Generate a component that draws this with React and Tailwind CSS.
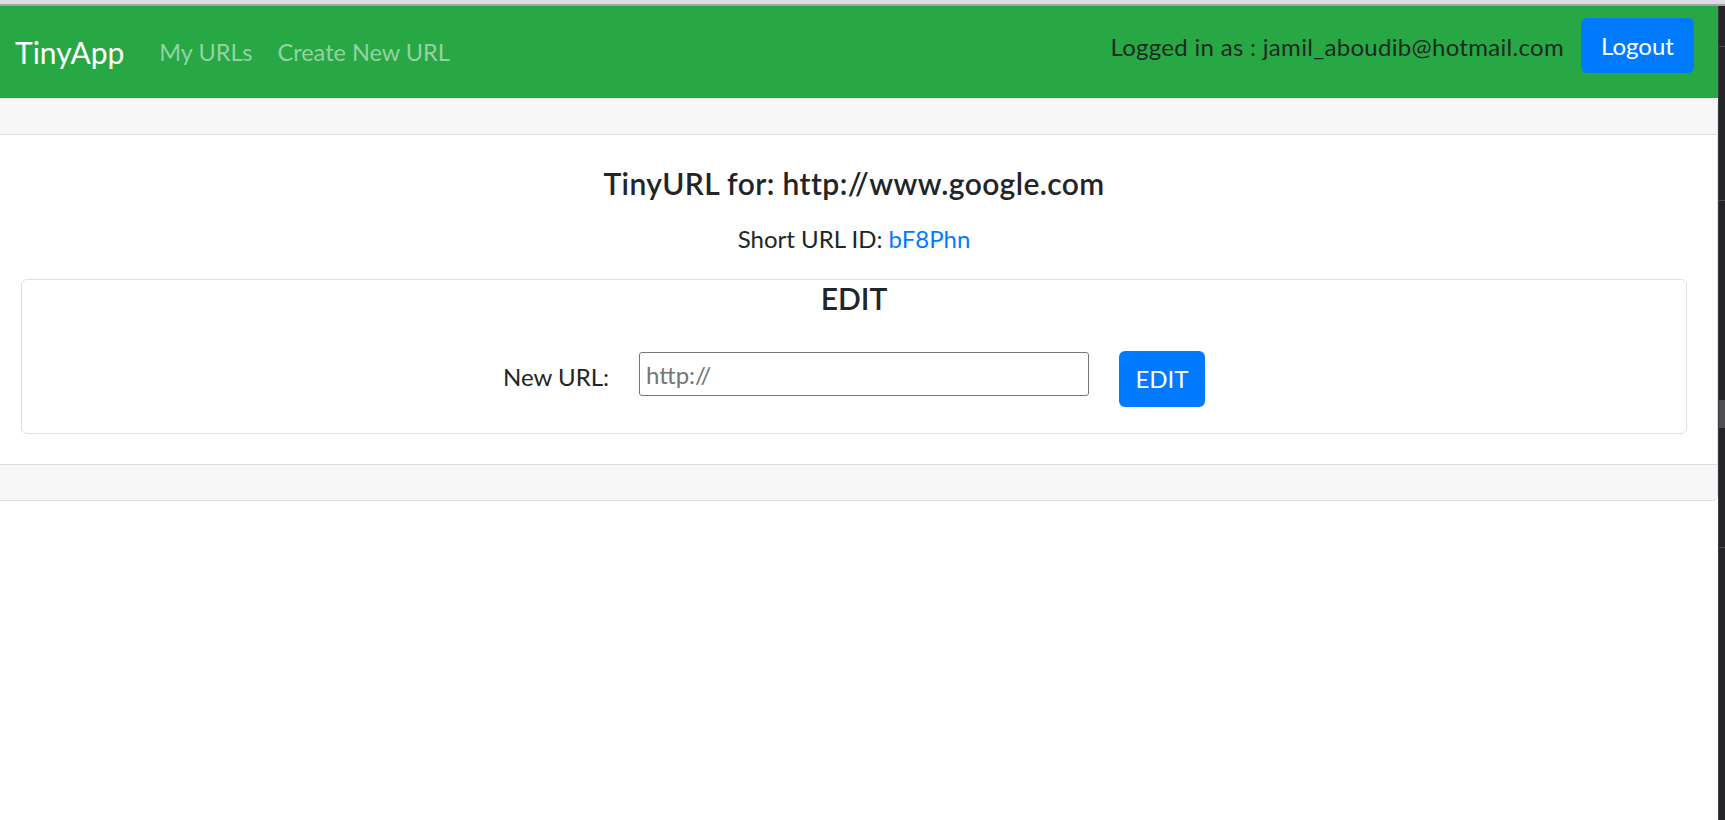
import React from "react";

export default function App() {
  return (
    <div
      className="w-[1725px] h-[820px] bg-white overflow-hidden flex flex-col text-[#212529] font-['Lato','Noto_Sans',sans-serif]"
    >
      <div className="h-[4px] bg-[#dcdce1] shrink-0" />
      <div className="h-[2px] bg-[#a4a4a6] shrink-0" />
      <div className="flex flex-1 min-h-0">
        <div className="w-[1718px] flex flex-col">
          <nav className="h-[92px] bg-[#28a745] flex items-center pl-[15px] pr-[24px] shrink-0">
            <span className="text-[30px] leading-[36px] text-white mr-[35px]">TinyApp</span>
            <a className="text-[23.5px] leading-[36px] text-[#93d3a2] mr-[25px]">My URLs</a>
            <a className="text-[23.5px] leading-[36px] text-[#93d3a2]">Create New URL</a>
            <div className="flex-1" />
            <div className="self-start mt-[12px] flex items-center">
              <span className="text-[24px] leading-[36px] tracking-[0.3px] text-[#1d2a21] mr-[17px] mt-[3px]">
                Logged in as : jamil_aboudib@hotmail.com
              </span>
              <button className="w-[113px] h-[55px] rounded-[6px] bg-[#007bff] text-white text-[24px] leading-[36px]">
                Logout
              </button>
            </div>
          </nav>

          <div className="border-t border-r border-b border-[#dfdfdf] rounded-r-[6px] flex flex-col">
            <div className="h-[36px] bg-[#f7f7f7] border-b border-[#dfdfdf] rounded-tr-[6px]" />
            <div className="pl-[21px] pr-[30px] pt-[30px] pb-[30px] flex flex-col items-stretch">
              <h5 className="text-[30px] leading-[36px] font-semibold tracking-[0.4px] text-center mb-[12px]">
                TinyURL for: http://www.google.com
              </h5>
              <p className="text-[24px] leading-[36px] text-center mt-[8px] mb-[22px]">
                Short URL ID: <a className="text-[#007bff]">bF8Phn</a>
              </p>
              <div className="border border-[#dfdfdf] rounded-[6px] flex flex-col items-center pb-[26px]">
                <h5 className="text-[30px] leading-[36px] font-semibold text-center">EDIT</h5>
                <div className="mt-[35px] flex items-start gap-[30px]">
                  <label className="text-[24px] leading-[36px] mt-[8px]">New URL:</label>
                  <input
                    type="text"
                    placeholder="http://"
                    className="mt-[1px] w-[450px] h-[44px] border border-[#767676] rounded-[3px] px-[6px] text-[24px] placeholder:text-[#757575] outline-none"
                  />
                  <button className="w-[86px] h-[56px] rounded-[6px] bg-[#007bff] text-white text-[24px] leading-[36px]">
                    EDIT
                  </button>
                </div>
              </div>
            </div>
            <div className="h-[36px] bg-[#f7f7f7] border-t border-[#dfdfdf] rounded-br-[6px]" />
          </div>
        </div>
        <div className="w-[7px] bg-[#232427] border-l border-[#3a3b3e] flex flex-col">
          <div className="h-[40px]" />
          <div className="h-[1px] bg-[#4a4b4e]" />
          <div className="h-[153px]" />
          <div className="h-[1px] bg-[#4a4b4e]" />
          <div className="h-[199px]" />
          <div className="h-[28px] bg-[#4e4f52]" />
          <div className="h-[119px]" />
          <div className="h-[1px] bg-[#4a4b4e]" />
        </div>
      </div>
    </div>
  );
}
